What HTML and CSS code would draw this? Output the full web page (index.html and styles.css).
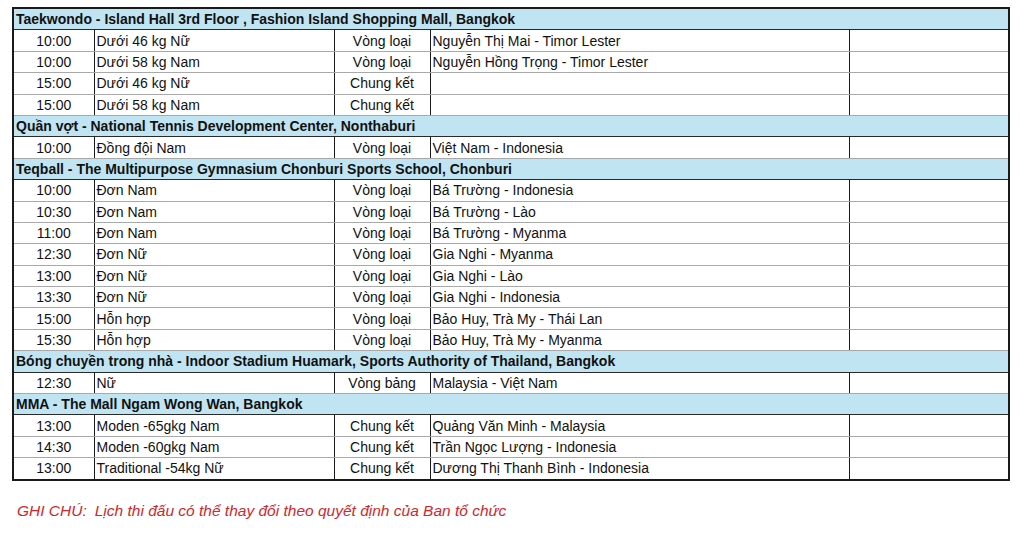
FILE: index.html
```html
<!DOCTYPE html>
<html lang="vi">
<head>
<meta charset="utf-8">
<link rel="stylesheet" href="styles.css">
</head>
<body>
<table class="sched">
  <colgroup>
    <col class="c-time"><col class="c-cat"><col class="c-stage"><col class="c-team"><col class="c-extra">
  </colgroup>
  <tbody>
    <tr class="venue"><td colspan="5">Taekwondo - Island Hall 3rd Floor , Fashion Island Shopping Mall, Bangkok</td></tr>
    <tr><td class="t">10:00</td><td>Dưới 46 kg Nữ</td><td class="s">Vòng loại</td><td>Nguyễn Thị Mai - Timor Lester</td><td></td></tr>
    <tr><td class="t">10:00</td><td>Dưới 58 kg Nam</td><td class="s">Vòng loại</td><td>Nguyễn Hồng Trọng - Timor Lester</td><td></td></tr>
    <tr><td class="t">15:00</td><td>Dưới 46 kg Nữ</td><td class="s">Chung kết</td><td></td><td></td></tr>
    <tr><td class="t">15:00</td><td>Dưới 58 kg Nam</td><td class="s">Chung kết</td><td></td><td></td></tr>
    <tr class="venue"><td colspan="5">Quần vợt - National Tennis Development Center, Nonthaburi</td></tr>
    <tr><td class="t">10:00</td><td>Đồng đội Nam</td><td class="s">Vòng loại</td><td>Việt Nam - Indonesia</td><td></td></tr>
    <tr class="venue"><td colspan="5">Teqball - The Multipurpose Gymnasium Chonburi Sports School, Chonburi</td></tr>
    <tr><td class="t">10:00</td><td>Đơn Nam</td><td class="s">Vòng loại</td><td>Bá Trường - Indonesia</td><td></td></tr>
    <tr><td class="t">10:30</td><td>Đơn Nam</td><td class="s">Vòng loại</td><td>Bá Trường - Lào</td><td></td></tr>
    <tr><td class="t">11:00</td><td>Đơn Nam</td><td class="s">Vòng loại</td><td>Bá Trường - Myanma</td><td></td></tr>
    <tr><td class="t">12:30</td><td>Đơn Nữ</td><td class="s">Vòng loại</td><td>Gia Nghi - Myanma</td><td></td></tr>
    <tr><td class="t">13:00</td><td>Đơn Nữ</td><td class="s">Vòng loại</td><td>Gia Nghi - Lào</td><td></td></tr>
    <tr><td class="t">13:30</td><td>Đơn Nữ</td><td class="s">Vòng loại</td><td>Gia Nghi - Indonesia</td><td></td></tr>
    <tr><td class="t">15:00</td><td>Hỗn hợp</td><td class="s">Vòng loại</td><td>Bảo Huy, Trà My - Thái Lan</td><td></td></tr>
    <tr><td class="t">15:30</td><td>Hỗn hợp</td><td class="s">Vòng loại</td><td>Bảo Huy, Trà My - Myanma</td><td></td></tr>
    <tr class="venue"><td colspan="5">Bóng chuyền trong nhà - Indoor Stadium Huamark, Sports Authority of Thailand, Bangkok</td></tr>
    <tr><td class="t">12:30</td><td>Nữ</td><td class="s">Vòng bảng</td><td>Malaysia - Việt Nam</td><td></td></tr>
    <tr class="venue"><td colspan="5">MMA - The Mall Ngam Wong Wan, Bangkok</td></tr>
    <tr><td class="t">13:00</td><td>Moden -65gkg Nam</td><td class="s">Chung kết</td><td>Quảng Văn Minh - Malaysia</td><td></td></tr>
    <tr><td class="t">14:30</td><td>Moden -60gkg Nam</td><td class="s">Chung kết</td><td>Trần Ngọc Lượng - Indonesia</td><td></td></tr>
    <tr><td class="t">13:00</td><td>Traditional -54kg Nữ</td><td class="s">Chung kết</td><td>Dương Thị Thanh Bình - Indonesia</td><td></td></tr>
  </tbody>
</table>
<p class="note"><span class="note-label">GHI CHÚ:</span><span>Lịch thi đấu có thể thay đổi theo quyết định của Ban tổ chức</span></p>
</body>
</html>
```

FILE: styles.css
```css
html, body {
  margin: 0;
  padding: 0;
  background: #ffffff;
}
body {
  font-family: "Liberation Sans", Arial, sans-serif;
  color: #111;
  font-size: 14px;
}
.sched {
  margin: 7px 0 0 12px;
  border-collapse: collapse;
  table-layout: fixed;
  width: 996px;
  border: 2px solid #1a1a1a;
}
.c-time { width: 81px; }
.c-cat { width: 240px; }
.c-stage { width: 96px; }
.c-team { width: 419px; }
.c-extra { width: 160px; }
.sched td {
  height: 20.4px;
  padding: 0 2px;
  line-height: 16px;
  white-space: nowrap;
  overflow: hidden;
  border-left: 1px solid #1a1a1a;
  border-right: 1px solid #1a1a1a;
  border-top: 1px solid #a9a9a9;
  border-bottom: 1px solid #a9a9a9;
  vertical-align: middle;
}
.sched td.t, .sched td.s {
  text-align: center;
}
.sched tr.venue td {
  background: #c0e4f2;
  font-weight: bold;
  border-top: 1px solid #2a2a2a;
  border-bottom: 1px solid #2a2a2a;
  padding-left: 2px;
}
.note {
  margin: 21px 0 0 17px;
  color: #d0282c;
  font-style: italic;
  font-size: 15.5px;
}
.note-label {
  margin-right: 8px;
}
```
